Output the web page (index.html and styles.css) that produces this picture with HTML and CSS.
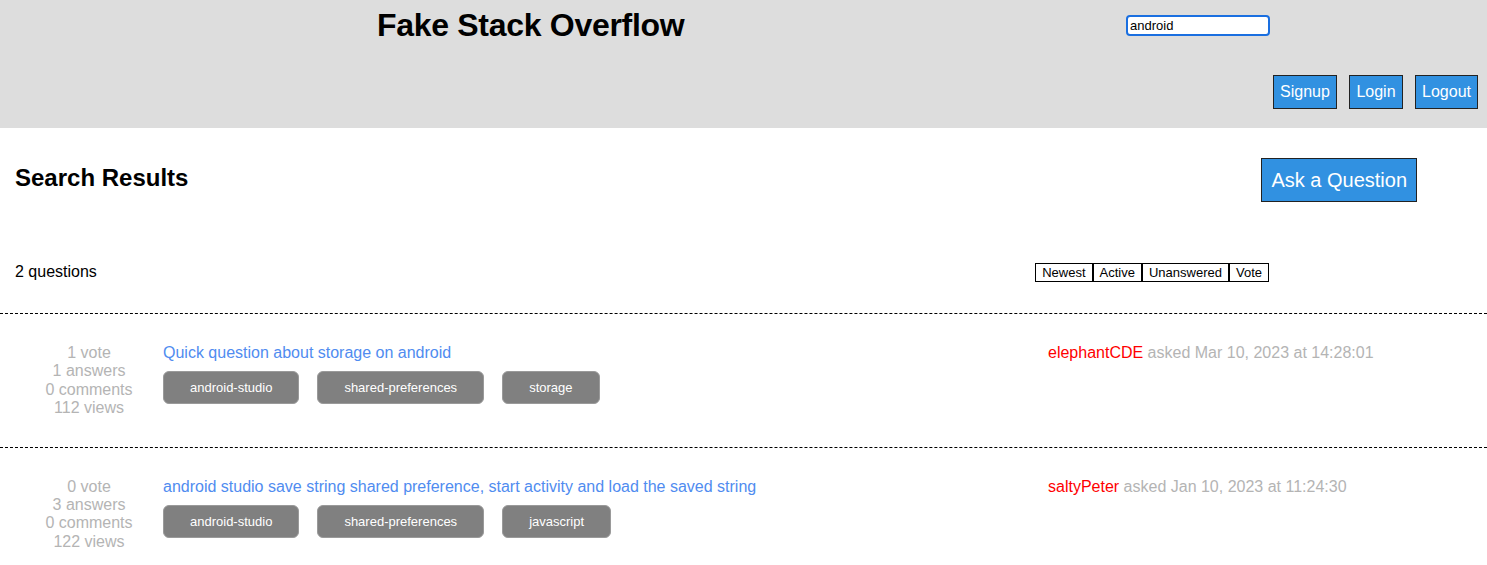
FILE: index.html
```html
<!DOCTYPE html>
<html>
<head>
<meta charset="utf-8">
<title>Fake Stack Overflow</title>
<link rel="stylesheet" href="styles.css">
</head>
<body>
<header class="header">
  <h1 class="site-title">Fake Stack Overflow</h1>
  <div class="header-right">
    <input class="search" type="text" value="android">
    <div class="auth">
      <button class="btn">Signup</button>
      <button class="btn">Login</button>
      <button class="btn">Logout</button>
    </div>
  </div>
</header>
<main class="main">
  <div class="top-row">
    <h2 class="page-title">Search Results</h2>
    <button class="btn ask">Ask a Question</button>
  </div>
  <div class="count-row">
    <div class="count">2 questions</div>
    <div class="sort">
      <button class="sort-btn">Newest</button><button class="sort-btn">Active</button><button class="sort-btn">Unanswered</button><button class="sort-btn">Vote</button>
    </div>
  </div>
  <div class="questions">
    <div class="question">
      <div class="stats">
        <div>1 vote</div>
        <div>1 answers</div>
        <div>0 comments</div>
        <div>112 views</div>
      </div>
      <div class="q-body">
        <div class="q-title">Quick question about storage on android</div>
        <div class="tags">
          <span class="tag">android-studio</span>
          <span class="tag">shared-preferences</span>
          <span class="tag">storage</span>
        </div>
      </div>
      <div class="meta"><span class="author">elephantCDE</span> asked Mar 10, 2023 at 14:28:01</div>
    </div>
    <div class="question">
      <div class="stats">
        <div>0 vote</div>
        <div>3 answers</div>
        <div>0 comments</div>
        <div>122 views</div>
      </div>
      <div class="q-body">
        <div class="q-title">android studio save string shared preference, start activity and load the saved string</div>
        <div class="tags">
          <span class="tag">android-studio</span>
          <span class="tag">shared-preferences</span>
          <span class="tag">javascript</span>
        </div>
      </div>
      <div class="meta"><span class="author">saltyPeter</span> asked Jan 10, 2023 at 11:24:30</div>
    </div>
  </div>
</main>
</body>
</html>
```

FILE: styles.css
```css
* { box-sizing: border-box; }
body {
  margin: 0;
  font-family: "Liberation Sans", Arial, Helvetica, sans-serif;
  color: #000;
  background: #fff;
}
.header {
  height: 128px;
  background: #dddddd;
  display: flex;
  justify-content: space-between;
  align-items: flex-start;
}
.site-title {
  margin: 7px 0 0 377px;
  font-size: 32px;
  font-weight: bold;
  letter-spacing: -0.3px;
}
.header-right {
  display: flex;
  flex-direction: column;
  align-items: flex-end;
  padding-right: 9px;
}
.search {
  margin: 15px 208px 0 0;
  width: 144px;
  height: 21px;
  border: 2px solid #1a6fe0;
  border-radius: 4px;
  padding: 0 2px;
  font-family: "Liberation Sans", Arial, sans-serif;
  font-size: 13px;
  color: #000;
  background: #fff;
  outline: none;
}
.auth {
  display: flex;
  gap: 12.5px;
  margin-top: 39px;
}
.btn {
  font-family: "Liberation Sans", Arial, sans-serif;
  font-size: 16px;
  color: #fff;
  background: #3191e1;
  border: 1px solid #222;
  padding: 7px 6px;
  line-height: 18px;
  cursor: pointer;
}
.main {
  padding: 30px 0 0 0;
}
.top-row {
  display: flex;
  justify-content: space-between;
  align-items: center;
  padding: 0 70px 0 15px;
}
.page-title {
  margin: 0 0 4px 0;
  font-size: 24px;
  font-weight: bold;
}
.ask {
  font-size: 20px;
  line-height: 24px;
  padding: 9px 9px;
}
.count-row {
  display: flex;
  justify-content: space-between;
  align-items: center;
  padding: 0 218px 0 15px;
  margin-top: 60px;
  height: 20px;
}
.count {
  font-size: 16px;
}
.sort {
  display: flex;
}
.sort-btn {
  font-family: "Liberation Sans", Arial, sans-serif;
  font-size: 13px;
  line-height: 15px;
  padding: 1px 6px;
  border: 1px solid #000;
  background: #fff;
  color: #000;
  height: 19px;
}
.questions {
  margin-top: 31px;
}
.question {
  display: flex;
  border-top: 1px dashed #000;
  padding: 30px 0 29px 15px;
  font-size: 16px;
  line-height: 18.4px;
}
.stats {
  width: 148px;
  text-align: center;
  color: #b4b4b4;
}
.q-body {
  width: 885px;
}
.q-title {
  color: #508cf0;
}
.tags {
  display: flex;
  gap: 18px;
  margin-top: 9px;
}
.tag {
  display: inline-block;
  background: #808080;
  border: 1px solid #9a9a9a;
  border-radius: 6px;
  color: #fff;
  font-size: 13px;
  line-height: 15px;
  padding: 8px 26px;
}
.meta {
  color: #b4b4b4;
}
.author {
  color: #ff0000;
}
```
